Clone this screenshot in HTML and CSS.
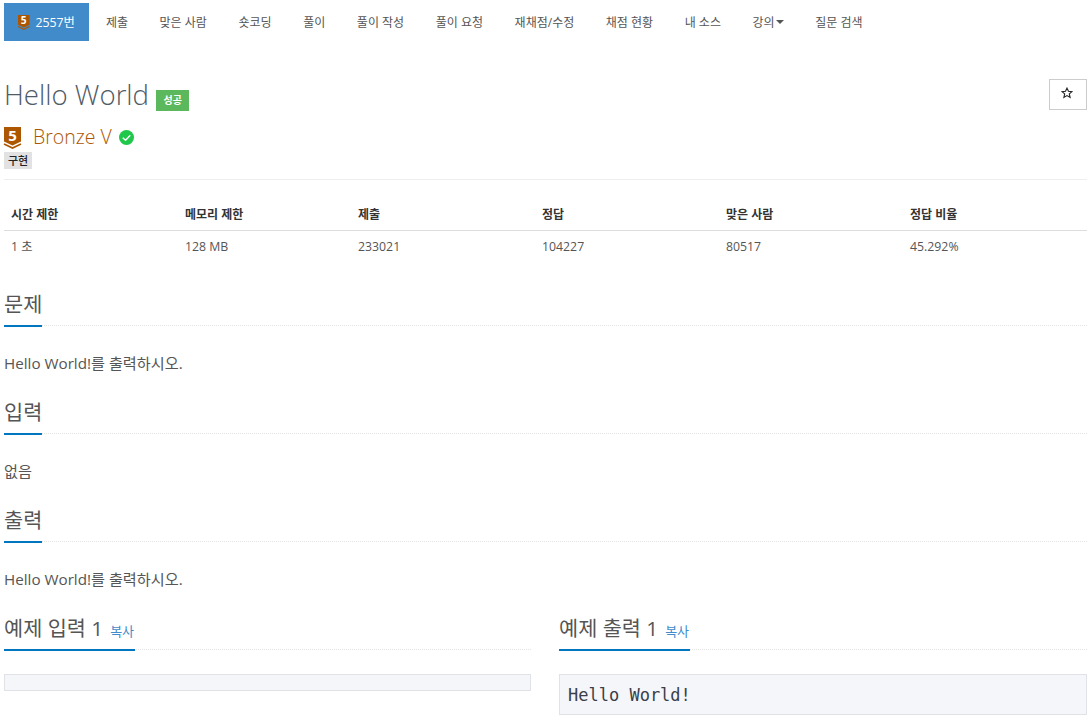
FILE: index.html
```html
<!DOCTYPE html>
<html lang="ko">
<head>
<meta charset="utf-8">
<title>Hello World</title>
<link rel="stylesheet" href="styles.css">
</head>
<body>
<nav class="nav">
  <a class="nav-item active"><svg class="tier-small" viewBox="0 0 17 22"><path d="M0 0H17V14.5L8.5 18.5L0 14.5Z" fill="#ad5600"/><path d="M0 17L8.5 21L17 17" fill="none" stroke="#ad5600" stroke-width="1.8"/><text x="8.5" y="13" class="tier-num" font-size="15">5</text></svg>2557번</a>
  <a class="nav-item">제출</a>
  <a class="nav-item">맞은 사람</a>
  <a class="nav-item">숏코딩</a>
  <a class="nav-item">풀이</a>
  <a class="nav-item">풀이 작성</a>
  <a class="nav-item">풀이 요청</a>
  <a class="nav-item">재채점/수정</a>
  <a class="nav-item">채점 현황</a>
  <a class="nav-item">내 소스</a>
  <a class="nav-item">강의<span class="caret"></span></a>
  <a class="nav-item">질문 검색</a>
</nav>

<header class="title-block">
  <div class="title-row">
    <h1 class="title">Hello World</h1>
    <span class="label-success">성공</span>
    <button class="star-btn"><svg viewBox="0 0 14 14" width="12" height="12"><path d="M7 1.3L8.7 5L12.7 5.4L9.7 8.1L10.6 12.1L7 10L3.4 12.1L4.3 8.1L1.3 5.4L5.3 5Z" fill="none" stroke="#222" stroke-width="1.3"/></svg></button>
  </div>
  <div class="tier-row">
    <svg class="tier-big" viewBox="0 0 17 22"><path d="M0 0H17V14.5L8.5 18.5L0 14.5Z" fill="#ad5600"/><path d="M0 17L8.5 21L17 17" fill="none" stroke="#ad5600" stroke-width="1.6"/><text x="8.5" y="13.5" class="tier-num" font-size="15">5</text></svg>
    <span class="tier-name">Bronze V</span>
    <svg class="check" viewBox="0 0 16 16" width="15" height="15"><circle cx="8" cy="8" r="8" fill="#1fc74a"/><path d="M4 8.3L7 11L12 5.5" fill="none" stroke="#fff" stroke-width="1.5"/></svg>
  </div>
  <span class="tag">구현</span>
</header>

<table class="info">
  <thead>
    <tr><th class="c1">시간 제한</th><th class="c2">메모리 제한</th><th class="c3">제출</th><th class="c3">정답</th><th class="c3">맞은 사람</th><th>정답 비율</th></tr>
  </thead>
  <tbody>
    <tr><td>1 초</td><td>128 MB</td><td>233021</td><td>104227</td><td>80517</td><td>45.292%</td></tr>
  </tbody>
</table>

<section class="sec first">
  <div class="headline"><h2>문제</h2></div>
  <p class="body-text">Hello World!를 출력하시오.</p>
</section>
<section class="sec">
  <div class="headline"><h2>입력</h2></div>
  <p class="body-text">없음</p>
</section>
<section class="sec">
  <div class="headline"><h2>출력</h2></div>
  <p class="body-text">Hello World!를 출력하시오.</p>
</section>

<div class="samples">
  <section class="sample">
    <div class="headline"><h2>예제 입력 1 <a class="copy">복사</a></h2></div>
    <pre class="pre"></pre>
  </section>
  <section class="sample">
    <div class="headline"><h2>예제 출력 1 <a class="copy">복사</a></h2></div>
    <pre class="pre">Hello World!</pre>
  </section>
</div>
</body>
</html>
```

FILE: styles.css
```css
* { box-sizing: border-box; }
html, body { height: 720px; overflow: hidden; }
body {
  margin: 0;
  padding: 0 5px 0 4px;
  background: #fff;
  color: #555;
  font-family: "Open Sans", "Noto Sans CJK KR", sans-serif;
  font-size: 14px;
}
.nav { display: flex; margin-top: 3px; height: 38px; }
.nav-item {
  display: flex; align-items: center;
  padding: 0 15.8px;
  font-size: 12px;
  color: #555;
  white-space: nowrap;
}
.nav-item.active { background: #428bca; color: #fff; font-size: 12.3px; padding: 0 14px 0 14px; margin-right: 1.1px; width: 85px; }
.tier-small { width: 11.5px; height: 15px; margin-right: 6px; flex: none; overflow: visible; }
.tier-num { fill: #fff; font-weight: 700; text-anchor: middle; font-family: "Open Sans", sans-serif; }
.caret {
  display: inline-block; width: 0; height: 0; margin-left: 1px;
  border-top: 4px solid #555; border-left: 4px solid transparent; border-right: 4px solid transparent;
}
.title-block { border-bottom: 1px solid #eee; height: 139px; padding-top: 34px; }
.title-row { display: flex; align-items: center; height: 42px; }
.title { margin: -4px 0 0; font-size: 27.6px; font-weight: 300; color: #4f5b66; line-height: 40px; }
.label-success {
  background: #5cb85c; color: #fff; font-size: 10px; font-weight: 700;
  padding: 0 7.5px; height: 21px; line-height: 21px; margin: 8px 0 0 7px;
}
.star-btn {
  margin-left: auto; width: 38px; height: 31px; padding: 0 2px 3px 0; margin-top: -3px;
  background: #fff; border: 1px solid #ccc; display: flex; align-items: center; justify-content: center;
}
.tier-row { display: flex; align-items: flex-start; height: 25px; margin-top: 10px; }
.tier-big { width: 17px; height: 22px; overflow: visible; }
.tier-name { font-size: 19.5px; font-weight: 300; color: #ad5600; margin-left: 12px; line-height: 20px; }
.check { margin-left: 7px; margin-top: 3px; }
.tag {
  display: inline-block; vertical-align: top; background: #e2e2e2; color: #222; font-size: 11px; font-weight: 500;
  padding: 0 4px; height: 17px; line-height: 17px;
}
.info { width: 100%; border-collapse: collapse; table-layout: fixed; margin-top: 18px; font-size: 12.3px; }
.info th { text-align: left; color: #333; font-weight: 700; font-size: 12px; padding: 7px; height: 32px; border-bottom: 1px solid #ddd; }
.info td { padding: 6px 7px; color: #555; height: 30px; }
.c1 { width: 174px; }
.c2 { width: 173px; }
.c3 { width: 184px; }
.sec.first { margin-top: 27px; }
.headline { border-bottom: 1px dotted #e4e4e4; height: 38px; margin-bottom: 27px; }
.headline h2 {
  display: inline-block; height: 39px; margin: 0; padding: 0;
  font-size: 20.8px; font-weight: 400; color: #555; line-height: 32px;
  border-bottom: 2px solid #0076c0;
  white-space: nowrap;
}
.body-text { margin: 0; font-size: 15.2px; line-height: 20px; height: 43px; color: #555; }
.samples { display: grid; grid-template-columns: 527px 1fr; gap: 28px; }
.sample { min-width: 0; }
.sample .headline { margin-bottom: 24px; }
.sample .headline h2 { padding-right: 1px; }
.copy { font-size: 13px; color: #428bca; margin-left: 1.5px; }
.pre {
  margin: 0; padding: 7.5px 8px; min-height: 17px;
  background: #f5f6f9; border: 1px solid #e1e1e8;
  font-family: "DejaVu Sans Mono", monospace;
  font-size: 17px; line-height: 24px; color: #3a3f4a;
}
```
